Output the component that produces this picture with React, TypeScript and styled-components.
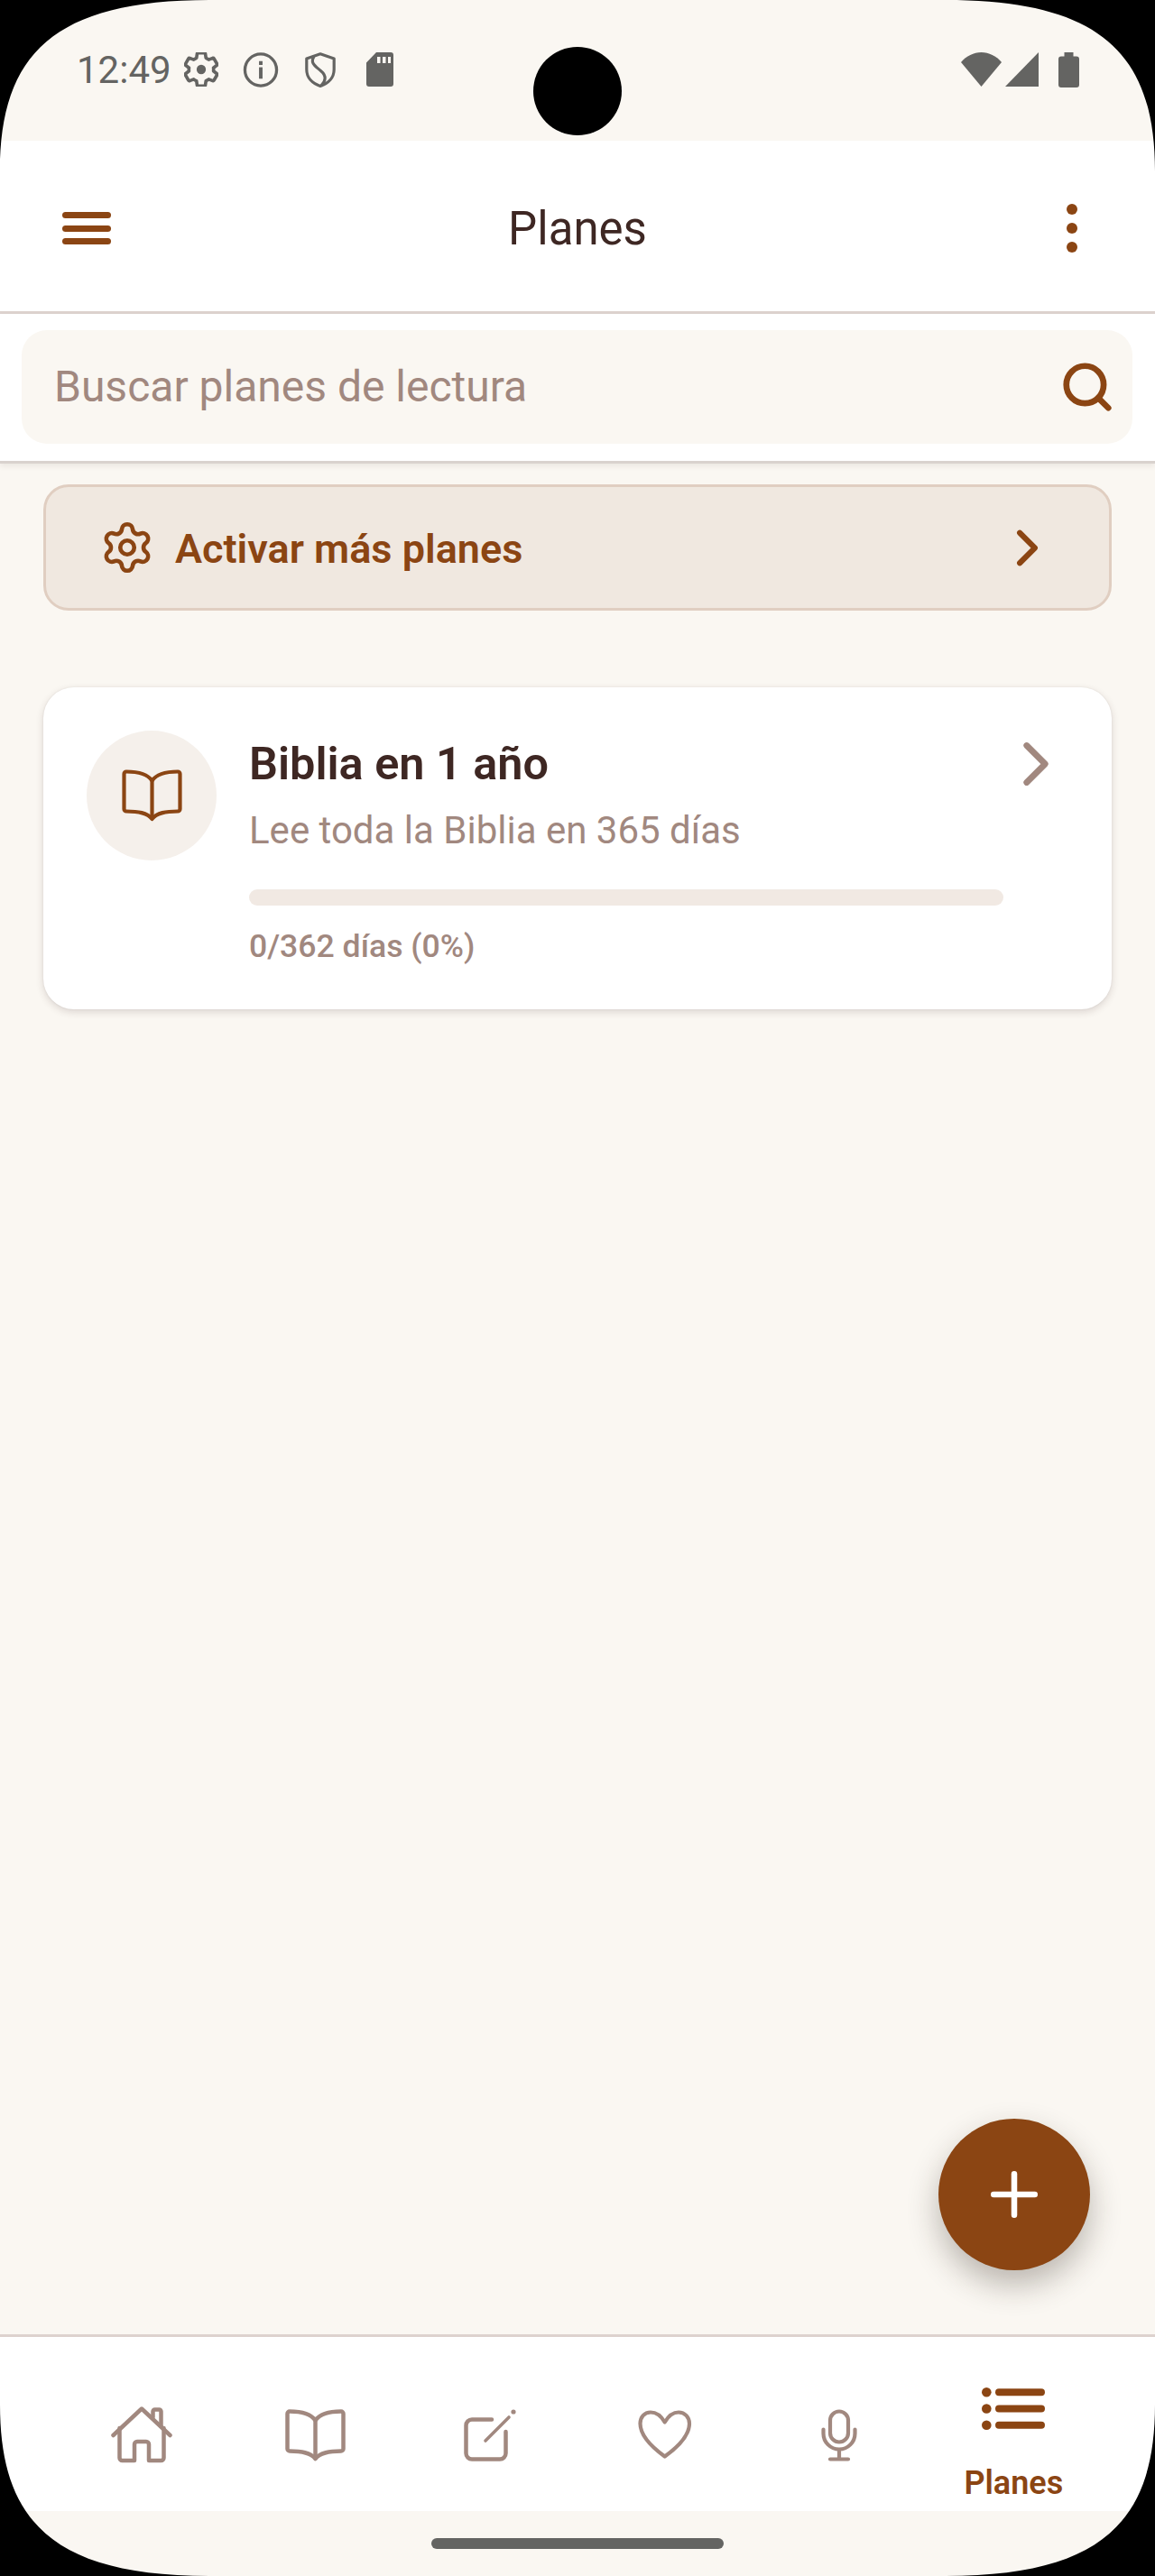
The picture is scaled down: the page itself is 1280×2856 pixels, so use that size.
import React from "react";
import styled, { createGlobalStyle } from "styled-components";
import { Settings, ChevronRight, Plus, Search } from "lucide-react";

const BROWN = "#8B4513";
const INK = "#3E2723";
const MUTED = "#A1887F";
const CREAM = "#FAF7F2";
const STATUS = "#646462";
const LINE = "#DDD2CE";

const Global = createGlobalStyle`
  html, body { margin: 0; padding: 0; background: #000; }
  body { font-family: Roboto, "Liberation Sans", sans-serif; }
  * { box-sizing: border-box; }
`;

const Phone = styled.div`
  position: relative;
  width: 1280px;
  height: 2856px;
  display: flex;
  flex-direction: column;
  overflow: hidden;
  background: ${CREAM};
  color: ${INK};
`;

const Corner = styled.svg<{ $right?: boolean; $bottom?: boolean }>`
  position: absolute;
  width: 232px;
  height: 190px;
  z-index: 5;
  top: ${(p) => (p.$bottom ? "auto" : "0")};
  bottom: ${(p) => (p.$bottom ? "0" : "auto")};
  left: ${(p) => (p.$right ? "auto" : "0")};
  right: ${(p) => (p.$right ? "0" : "auto")};
  transform: scale(${(p) => (p.$right ? -1 : 1)}, ${(p) => (p.$bottom ? -1 : 1)});
`;

const Camera = styled.div`
  position: absolute;
  top: 52px;
  left: 591px;
  width: 98px;
  height: 98px;
  border-radius: 50%;
  background: #000;
  z-index: 6;
`;

const StatusBar = styled.div`
  height: 156px;
  flex: none;
  padding: 58px 84px 0 85px;
  display: flex;
  justify-content: space-between;
  align-items: flex-start;
  color: ${STATUS};
`;

const StatusGroup = styled.div<{ $gap: number }>`
  display: flex;
  align-items: flex-start;
  gap: ${(p) => p.$gap}px;
`;

const Clock = styled.span`
  font-size: 42px;
  line-height: 40px;
  width: 119px;
`;

const StatusIcon = styled.svg<{ $ml?: number }>`
  display: block;
  flex: none;
  color: ${STATUS};
  margin-left: ${(p) => p.$ml ?? 0}px;
`;

const Header = styled.header`
  height: 192px;
  flex: none;
  background: #fff;
  border-bottom: 3px solid ${LINE};
  display: flex;
  align-items: center;
  justify-content: space-between;
  padding: 5px 86px 0 69px;
  position: relative;
`;

const Title = styled.h1`
  margin: 2px 0 0;
  position: absolute;
  left: 0;
  right: 0;
  text-align: center;
  font-size: 51px;
  line-height: 60px;
  font-weight: 400;
  color: ${INK};
  pointer-events: none;
`;

const MenuLines = styled.div`
  width: 54px;
  display: flex;
  flex-direction: column;
  gap: 7.5px;
`;

const MenuLine = styled.span`
  display: block;
  height: 7px;
  border-radius: 4px;
  background: ${BROWN};
`;

const Kebab = styled.div`
  display: flex;
  flex-direction: column;
  gap: 8.5px;
`;

const KebabDot = styled.span`
  width: 12.5px;
  height: 12.5px;
  border-radius: 50%;
  background: ${BROWN};
`;

const SearchSection = styled.div`
  height: 166px;
  flex: none;
  background: #fff;
  padding: 18px 25px 0 24px;
  border-bottom: 3px solid #d9d2ce;
  box-shadow: 0 3px 6px rgba(62, 39, 35, 0.08);
  position: relative;
  z-index: 1;
`;

const SearchBox = styled.div`
  height: 126px;
  background: ${CREAM};
  border-radius: 28px;
  display: flex;
  align-items: center;
  justify-content: space-between;
  padding: 0 19px 0 36px;
`;

const Placeholder = styled.span`
  font-size: 48px;
  line-height: 56px;
  margin-top: -1px;
  color: ${MUTED};
`;

const Main = styled.main`
  flex: 1;
  min-height: 0;
  padding: 23px 48px 0;
  display: flex;
  flex-direction: column;
  gap: 85px;
`;

const ActivateButton = styled.div`
  height: 140px;
  flex: none;
  background: #f0e8e0;
  border: 3px solid #e0cec1;
  border-radius: 28px;
  display: flex;
  align-items: center;
  padding: 0 57px 0 59px;
  color: ${BROWN};
`;

const ActivateLabel = styled.span`
  flex: 1;
  margin-left: 22px;
  margin-top: 2px;
  font-size: 45px;
  font-weight: 600;
`;

const Card = styled.article`
  height: 357px;
  flex: none;
  background: #fff;
  border-radius: 34px;
  box-shadow: 0 3px 8px rgba(62, 39, 35, 0.16), 0 0 2px rgba(62, 39, 35, 0.1);
  padding: 48px 64px 0 48px;
  display: flex;
  align-items: flex-start;
`;

const IconCircle = styled.div`
  width: 144px;
  height: 144px;
  flex: none;
  border-radius: 50%;
  background: #f5f0eb;
  display: flex;
  align-items: center;
  justify-content: center;
  color: ${BROWN};
`;

const CardBody = styled.div`
  flex: 1;
  min-width: 0;
  margin-left: 36px;
  padding-right: 16px;
  padding-top: 7px;
`;

const CardTitle = styled.h2`
  margin: 0;
  font-size: 50.4px;
  line-height: 60px;
  font-weight: 600;
  color: ${INK};
`;

const CardSub = styled.p`
  margin: 16px 0 0;
  font-size: 42px;
  line-height: 56px;
  color: ${MUTED};
`;

const Progress = styled.div`
  height: 18px;
  margin-top: 37px;
  border-radius: 9px;
  background: #f1e9e3;
`;

const CardMeta = styled.div`
  margin-top: 23px;
  font-size: 35.6px;
  line-height: 44px;
  font-weight: 500;
  color: ${MUTED};
`;

const CardChevron = styled.div`
  width: 40px;
  height: 82px;
  flex: none;
  margin-top: -4px;
  display: flex;
  justify-content: center;
  color: ${MUTED};
  svg { flex: none; }
`;

const Fab = styled.div`
  position: absolute;
  left: 1040px;
  top: 2349px;
  width: 168px;
  height: 168px;
  border-radius: 50%;
  background: ${BROWN};
  color: #fff;
  display: flex;
  align-items: center;
  justify-content: center;
  box-shadow: 0 16px 34px rgba(40, 30, 20, 0.3);
  z-index: 3;
`;

const TabBar = styled.nav`
  height: 196px;
  flex: none;
  background: #fff;
  border-top: 3px solid ${LINE};
  display: flex;
  padding: 0 60px;
`;

const Tab = styled.div<{ $active?: boolean }>`
  flex: 1;
  display: flex;
  flex-direction: column;
  align-items: center;
  padding-top: ${(p) => (p.$active ? 56 : 77)}px;
  color: ${(p) => (p.$active ? BROWN : MUTED)};
`;

const TabIconBox = styled.div<{ $active?: boolean }>`
  height: ${(p) => (p.$active ? 47 : 63)}px;
  display: flex;
  align-items: center;
  justify-content: center;
`;

const TabLabel = styled.span`
  margin-top: 41px;
  font-size: 36px;
  line-height: 36px;
  font-weight: 600;
  color: ${BROWN};
`;

const GestureArea = styled.div`
  height: 72px;
  flex: none;
  display: flex;
  justify-content: center;
  padding-top: 30px;
`;

const GesturePill = styled.div`
  width: 324px;
  height: 12px;
  border-radius: 6px;
  background: ${STATUS};
`;

const BookIcon = ({ width, stroke }: { width: number; stroke: number }) => (
  <svg width={width} height={(width * 58) / 67} viewBox="0 0 67 58" fill="none" stroke="currentColor" strokeWidth={stroke} strokeLinejoin="round">
    <path d="M33.5 12.5C29 6 18 2.5 5 2.5A2.5 2.5 0 0 0 2.5 5V44A2.5 2.5 0 0 0 5 46.5C18 46.5 28 48 33.5 55C39 48 49 46.5 62 46.5A2.5 2.5 0 0 0 64.5 44V5A2.5 2.5 0 0 0 62 2.5C49 2.5 38 6 33.5 12.5Z" />
    <path d="M33.5 12.5V54" />
  </svg>
);

const HomeIcon = () => (
  <svg width="68" height="63" viewBox="0 0 68 63" fill="none" stroke="currentColor" strokeWidth="4.5" strokeLinecap="round" strokeLinejoin="round">
    <path d="M2.5 32L34 2.5L65.5 32" />
    <path d="M9.5 24V57A3 3 0 0 0 12.5 60H26V42A3 3 0 0 1 29 39H39A3 3 0 0 1 42 42V60H55.5A3 3 0 0 0 58.5 57V24" />
    <path d="M46.5 12V5.5A2 2 0 0 1 48.5 3.5H53.5A2 2 0 0 1 55.5 5.5V22" />
  </svg>
);

const EditIcon = () => (
  <svg width="58" height="58" viewBox="0 0 58 58" fill="none" stroke="currentColor" strokeWidth="4.5" strokeLinecap="round" strokeLinejoin="round">
    <path d="M31 11.5H9A6.5 6.5 0 0 0 2.5 18V49A6.5 6.5 0 0 0 9 55.5H40A6.5 6.5 0 0 0 46.5 49V25" />
    <path d="M24 35L50 9" strokeWidth="3.6" />
    <circle cx="55" cy="3" r="2.6" fill="currentColor" stroke="none" />
  </svg>
);

const HeartIcon = () => (
  <svg width="60" height="55" viewBox="0 0 60 55" fill="none" stroke="currentColor" strokeWidth="4.2" strokeLinejoin="round">
    <path d="M29.7 13.5C26 7 20 2.5 14 2.5C7 2.5 2.5 8 2.5 15C2.5 30 18 43 29.7 51.5C41.5 43 57 30 57 15C57 8 52 2.5 45 2.5C39 2.5 33.5 7 29.7 13.5Z" />
  </svg>
);

const MicIcon = () => (
  <svg width="40" height="58" viewBox="0 0 40 58" fill="none" stroke="currentColor" strokeWidth="4.2" strokeLinecap="round" strokeLinejoin="round">
    <rect x="10" y="2.5" width="20" height="34" rx="10" />
    <path d="M2.5 22.5V27A17.5 17.5 0 0 0 37.5 27V22.5" />
    <path d="M20 45V55.5M10 55.5H30" />
  </svg>
);

const ListIcon = () => (
  <svg width="70" height="47" viewBox="0 0 70 47" fill="currentColor">
    <circle cx="5.3" cy="5.3" r="5.3" />
    <circle cx="5.3" cy="23.5" r="5.3" />
    <circle cx="5.3" cy="41.7" r="5.3" />
    <rect x="15" y="1.3" width="55" height="8" rx="4" />
    <rect x="15" y="19.5" width="55" height="8" rx="4" />
    <rect x="15" y="37.7" width="55" height="8" rx="4" />
  </svg>
);

const GEAR =
  "M19.14 12.94c.04-.3.06-.61.06-.94 0-.32-.02-.64-.07-.94l2.03-1.58c.18-.14.23-.41.12-.61l-1.92-3.32c-.12-.22-.37-.29-.59-.22l-2.39.96c-.5-.38-1.03-.7-1.62-.94l-.36-2.54c-.04-.24-.24-.41-.48-.41h-3.84c-.24 0-.43.17-.47.41l-.36 2.54c-.59.24-1.13.57-1.62.94l-2.39-.96c-.22-.08-.47 0-.59.22L2.74 8.87c-.12.21-.08.47.12.61l2.03 1.58c-.05.3-.09.63-.09.94s.02.64.07.94l-2.03 1.58c-.18.14-.23.41-.12.61l1.92 3.32c.12.22.37.29.59.22l2.39-.96c.5.38 1.03.7 1.62.94l.36 2.54c.05.24.24.41.48.41h3.84c.24 0 .44-.17.47-.41l.36-2.54c.59-.24 1.13-.56 1.62-.94l2.39.96c.22.08.47 0 .59-.22l1.92-3.32c.12-.22.07-.47-.12-.61l-2.01-1.58z";

const CORNER = "M0 0H232C60 0 0 60 0 190Z";

export default function App() {
  return (
    <>
      <Global />
      <Phone>
        <StatusBar>
          <StatusGroup $gap={0}>
            <Clock>12:49</Clock>
            <StatusIcon width="38" height="38" viewBox="2 2 20 20" fill="none" stroke="currentColor" strokeWidth="1.9">
              <path d={GEAR} strokeLinejoin="round" />
              <circle cx="12" cy="12" r="2.7" fill="currentColor" stroke="none" />
            </StatusIcon>
            <StatusIcon $ml={27} width="40" height="39" viewBox="0 0 40 40" fill="none" stroke="currentColor" strokeWidth="3.4">
              <circle cx="20" cy="20" r="18" />
              <rect x="18" y="17" width="4" height="13" fill="currentColor" stroke="none" />
              <rect x="18" y="10" width="4" height="4.4" fill="currentColor" stroke="none" />
            </StatusIcon>
            <StatusIcon $ml={29} width="34" height="39" viewBox="0 0 34 39" fill="none" stroke="currentColor" strokeWidth="3.2" strokeLinejoin="round">
              <path d="M17 1.8L32.2 7V19C32.2 28 26 34.5 17 37.4C8 34.5 1.8 28 1.8 19V7Z" />
              <path d="M10 4.5C5 12 12 15.5 18 21C24 26 23 32 18 37" />
            </StatusIcon>
            <StatusIcon $ml={34} width="30" height="38" viewBox="0 0 30 38" fill="currentColor">
              <path d="M11 0H27A3 3 0 0 1 30 3V35A3 3 0 0 1 27 38H3A3 3 0 0 1 0 35V11.5ZM12 5V12H15.5V5ZM18 5V12H21.5V5ZM24 5V12H27V5Z" fillRule="evenodd" />
            </StatusIcon>
          </StatusGroup>
          <StatusGroup $gap={4}>
            <StatusIcon width="45" height="38" viewBox="0 0 45 38" fill="currentColor">
              <path d="M0 11C6 4 14 0 22.5 0S39 4 45 11L22.5 38Z" />
            </StatusIcon>
            <StatusIcon width="37" height="38" viewBox="0 0 37 38" fill="currentColor">
              <path d="M37 0V38H0Z" />
            </StatusIcon>
            <StatusIcon $ml={18} width="23" height="39" viewBox="0 0 23 39" fill="currentColor">
              <path d="M6.5 0H16.5V4.5H20A3 3 0 0 1 23 7.5V36A3 3 0 0 1 20 39H3A3 3 0 0 1 0 36V7.5A3 3 0 0 1 3 4.5H6.5Z" />
            </StatusIcon>
          </StatusGroup>
        </StatusBar>

        <Header>
          <MenuLines>
            <MenuLine />
            <MenuLine />
            <MenuLine />
          </MenuLines>
          <Title>Planes</Title>
          <Kebab>
            <KebabDot />
            <KebabDot />
            <KebabDot />
          </Kebab>
        </Header>

        <SearchSection>
          <SearchBox>
            <Placeholder>Buscar planes de lectura</Placeholder>
            <Search size={62} color={BROWN} strokeWidth={2.6} />
          </SearchBox>
        </SearchSection>

        <Main>
          <ActivateButton>
            <Settings size={62} strokeWidth={1.8} />
            <ActivateLabel>Activar más planes</ActivateLabel>
            <ChevronRight size={67} strokeWidth={2.2} />
          </ActivateButton>

          <Card>
            <IconCircle>
              <BookIcon width={67} stroke={4.2} />
            </IconCircle>
            <CardBody>
              <CardTitle>Biblia en 1 año</CardTitle>
              <CardSub>Lee toda la Biblia en 365 días</CardSub>
              <Progress />
              <CardMeta>0/362 días (0%)</CardMeta>
            </CardBody>
            <CardChevron>
              <ChevronRight size={82} strokeWidth={2} />
            </CardChevron>
          </Card>
        </Main>

        <Fab>
          <Plus size={78} strokeWidth={2} />
        </Fab>

        <TabBar>
          <Tab><TabIconBox><HomeIcon /></TabIconBox></Tab>
          <Tab><TabIconBox><BookIcon width={67} stroke={4.5} /></TabIconBox></Tab>
          <Tab><TabIconBox><EditIcon /></TabIconBox></Tab>
          <Tab><TabIconBox><HeartIcon /></TabIconBox></Tab>
          <Tab><TabIconBox><MicIcon /></TabIconBox></Tab>
          <Tab $active>
            <TabIconBox $active><ListIcon /></TabIconBox>
            <TabLabel>Planes</TabLabel>
          </Tab>
        </TabBar>

        <GestureArea>
          <GesturePill />
        </GestureArea>

        <Camera />
        <Corner viewBox="0 0 232 190"><path d={CORNER} fill="#000" /></Corner>
        <Corner $right viewBox="0 0 232 190"><path d={CORNER} fill="#000" /></Corner>
        <Corner $bottom viewBox="0 0 232 190"><path d={CORNER} fill="#000" /></Corner>
        <Corner $right $bottom viewBox="0 0 232 190"><path d={CORNER} fill="#000" /></Corner>
      </Phone>
    </>
  );
}
